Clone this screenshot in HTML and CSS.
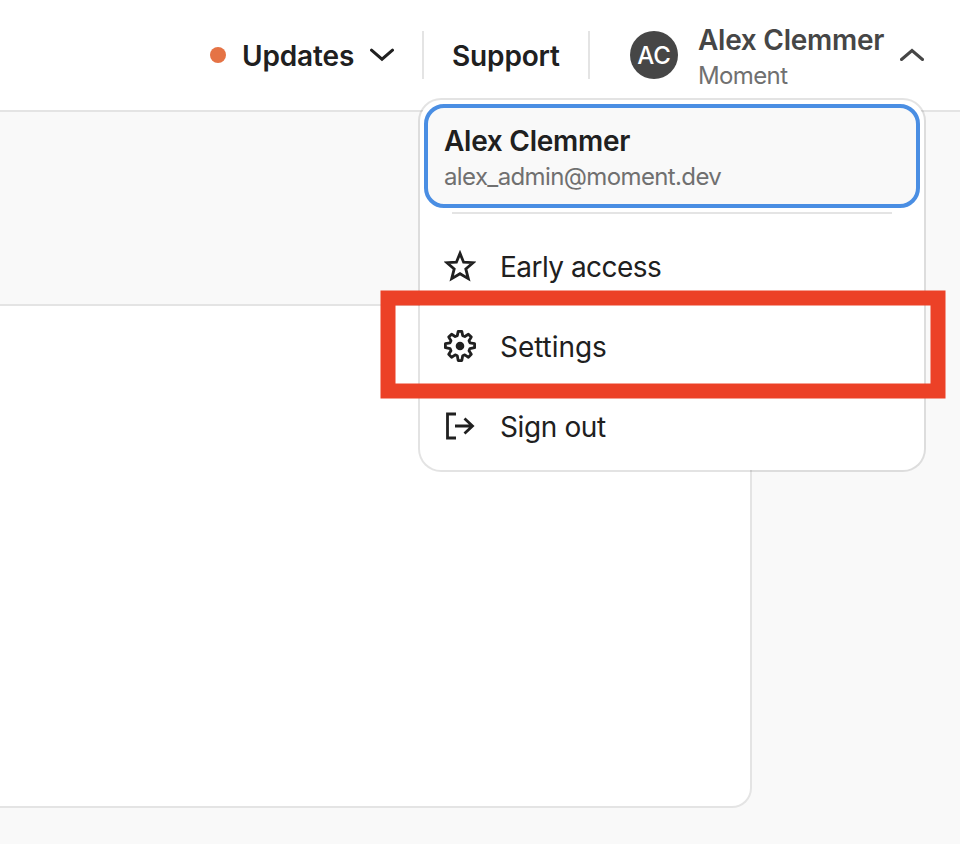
FILE: index.html
```html
<!DOCTYPE html>
<html lang="en">
<head>
<meta charset="utf-8">
<title>Moment</title>
<link rel="stylesheet" href="styles.css">
</head>
<body>
<header class="topbar">
  <div class="updates">
    <span class="dot"></span>
    <span class="label updates-label">Updates</span>
    <svg class="chevron" viewBox="0 0 24 14"><path d="M1.5 2.2 12 11.2 22.5 2.2"/></svg>
  </div>
  <span class="separator"></span>
  <span class="label support">Support</span>
  <span class="separator"></span>
  <div class="account">
    <span class="avatar">AC</span>
    <div class="identity">
      <span class="name">Alex Clemmer</span>
      <span class="detail org">Moment</span>
    </div>
    <svg class="chevron up" viewBox="0 0 24 14"><path d="M1.5 11.5 12 2.5 22.5 11.5"/></svg>
  </div>
</header>
<main class="content">
  <section class="card"></section>
</main>
<div class="menu">
  <div class="profile">
    <span class="name">Alex Clemmer</span>
    <span class="detail email">alex_admin@moment.dev</span>
  </div>
  <hr class="rule">
  <nav class="items">
    <a class="item">
      <svg class="icon" viewBox="0 0 32 32"><path d="M16 3.4 19.6 12.2 29 12.7 21.8 18.9 24.3 28.6 16 23.7 7.7 28.6 10.2 18.9 3 12.7 12.4 12.2Z"/></svg>
      <span class="text early">Early access</span>
    </a>
    <a class="item">
      <svg class="icon" viewBox="0 0 32 32"><path stroke-linejoin="round" d="M14.2 1.4h3.6l.9 4.2 2.1.9 3.6-2.3 2.9 2.9-2.3 3.6.9 2.1 4.7.9v4l-4.7.9-.9 2.1 2.3 3.6-2.9 2.9-3.6-2.3-2.1.9-.9 4.8h-3.6l-.9-4.8-2.1-.9-3.6 2.3-2.9-2.9L7 20.7l-.9-2.1-4.7-.9v-4l4.7-.9.9-2.1-2.3-3.6 2.9-2.9 3.6 2.3 2.1-.9z"/><circle class="solid" cx="16" cy="16" r="4.3"/></svg>
      <span class="text settings">Settings</span>
    </a>
    <a class="item">
      <svg class="icon" viewBox="0 0 32 32"><path d="M12 4H3.5V28H12M11 16H28M20.5 8.5 28.5 16 20.5 23.5"/></svg>
      <span class="text signout">Sign out</span>
    </a>
  </nav>
</div>
<svg class="highlight" viewBox="0 0 566 109"><rect x="8" y="8" width="550" height="93"/></svg>
</body>
</html>
```
FILE: styles.css
```css
* { box-sizing: border-box; }
body {
  margin: 0;
  width: 960px;
  height: 844px;
  overflow: hidden;
  background: #f9f9f9;
  color: #202020;
  font-family: Inter, "Liberation Sans", sans-serif;
  font-size: 28px;
  line-height: 36px;
}
svg { display: block; fill: none; stroke: currentColor; flex: none; }
.topbar {
  height: 112px;
  padding: 0 36px 0 210px;
  display: flex;
  align-items: center;
  background: #fff;
  border-bottom: 2px solid #e4e4e4;
}
.updates { display: flex; align-items: center; width: 212px; }
.dot { width: 16px; height: 16px; border-radius: 50%; background: #e57345; margin-right: 16px; }
.label { font-weight: 600; white-space: nowrap; letter-spacing: -.15px; padding-top: 2px; }
.updates-label { width: 128px; }
.chevron { width: 24px; height: 14px; stroke-width: 3; stroke-linecap: round; }
.separator { width: 2px; height: 48px; background: #e4e4e4; }
.support { width: 164px; padding-left: 28px; }
.account { display: flex; align-items: center; flex: 1; padding-left: 40px; color: #464646; }
.avatar {
  width: 48px; height: 48px; border-radius: 50%;
  background: #464646; color: #fff;
  font-size: 24px; font-weight: 500; line-height: 49px; text-align: center;
}
.identity { margin-left: 20px; width: 202px; height: 72px; padding-top: 3px; }
.name { display: block; font-weight: 600; white-space: nowrap; letter-spacing: -.27px; }
.detail { display: block; font-size: 24px; line-height: 36px; color: #707070; white-space: nowrap; letter-spacing: -.62px; }
.content { padding-top: 192px; }
.card {
  width: 752px; height: 504px;
  background: #fff;
  border: 2px solid #e4e4e4;
  border-left: 0;
  border-radius: 0 0 20px 0;
}
.menu {
  position: absolute; left: 418px; top: 98px;
  width: 508px; height: 374px;
  padding: 4px;
  background: #fff;
  background-clip: padding-box;
  border: 2px solid rgba(0, 0, 0, .11);
  border-radius: 23px;
}
.profile {
  height: 104px;
  padding: 15px 16px 0;
  border: 4px solid #4a8ee3;
  border-radius: 20px;
  background: #f9f9f9;
}
.rule { height: 2px; border: 0; margin: 4px 28px 12px; background: #e4e4e4; }
.item { display: flex; align-items: center; height: 80px; padding-left: 20px; }
.icon { width: 32px; height: 32px; margin-right: 24px; stroke-width: 2.8; }
.solid { fill: currentColor; stroke: none; }
.text { padding-top: 2px; }
.early { letter-spacing: -.53px; }
.settings { letter-spacing: -.05px; }
.signout { letter-spacing: -.38px; }
.highlight {
  position: absolute; left: 380px; top: 290px;
  width: 566px; height: 109px;
  stroke: #ec4127;
  stroke-width: 15;
}
```
